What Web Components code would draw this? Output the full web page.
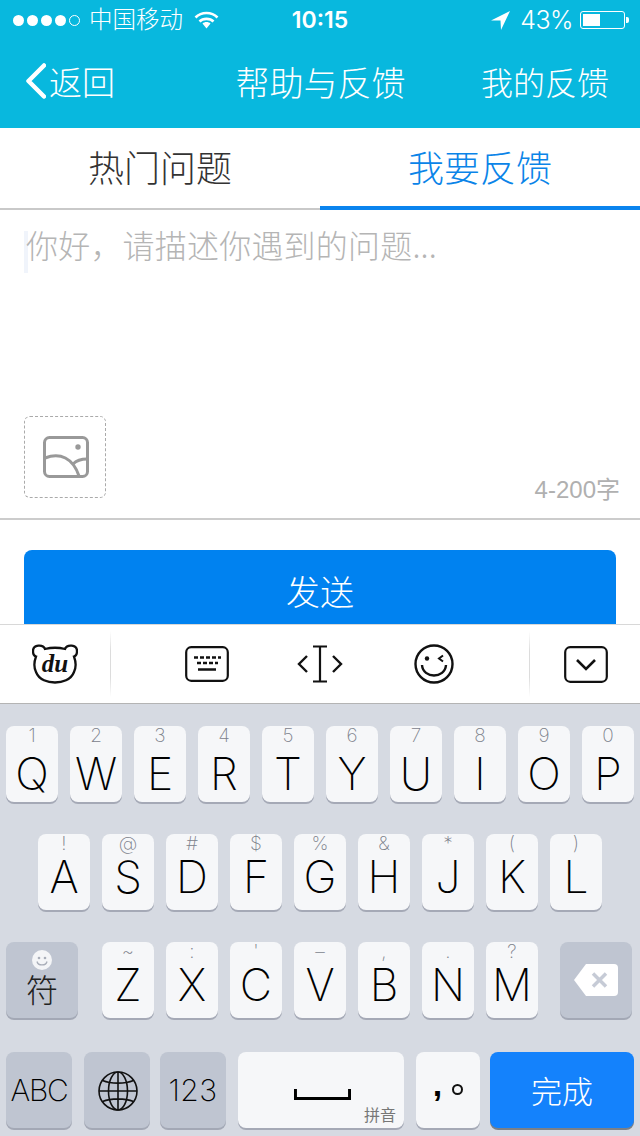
<!DOCTYPE html>
<html lang="zh">
<head>
<meta charset="utf-8">
<title>帮助与反馈</title>
<style>
  html, body { margin: 0; padding: 0; }
  body {
    width: 640px;
    height: 1136px;
    overflow: hidden;
    display: flex;
    flex-direction: column;
    background: #fff;
    font-family: "Noto Sans CJK SC", sans-serif;
    font-weight: 300;
  }
</style>
</head>
<body>
  <status-bar></status-bar>
  <nav-bar></nav-bar>
  <tab-bar></tab-bar>
  <feedback-form></feedback-form>
  <ime-toolbar></ime-toolbar>
  <ime-keyboard>
    <kb-row style="--drop:6px">
      <kb-key hint="1">Q</kb-key><kb-key hint="2">W</kb-key><kb-key hint="3">E</kb-key><kb-key hint="4">R</kb-key><kb-key hint="5">T</kb-key>
      <kb-key hint="6">Y</kb-key><kb-key hint="7">U</kb-key><kb-key hint="8">I</kb-key><kb-key hint="9">O</kb-key><kb-key hint="0">P</kb-key>
    </kb-row>
    <kb-row style="--drop:1px">
      <kb-key hint="!">A</kb-key><kb-key hint="@">S</kb-key><kb-key hint="#">D</kb-key><kb-key hint="$">F</kb-key><kb-key hint="%">G</kb-key>
      <kb-key hint="&amp;">H</kb-key><kb-key hint="*">J</kb-key><kb-key hint="(">K</kb-key><kb-key hint=")">L</kb-key>
    </kb-row>
    <kb-row style="--drop:1px">
      <kb-key dark style="width:72px;margin-right:12px">
        <symbol-face></symbol-face>
      </kb-key>
      <kb-key hint="~">Z</kb-key><kb-key hint=":">X</kb-key><kb-key hint="'">C</kb-key><kb-key hint="–">V</kb-key>
      <kb-key hint=",">B</kb-key><kb-key hint=".">N</kb-key><kb-key hint="?">M</kb-key>
      <kb-key dark plain style="width:72px;margin-left:10px;margin-right:2px">
        <svg width="46" height="34" viewBox="0 0 46 34">
          <path d="M13 1H41a4 4 0 0 1 4 4V29a4 4 0 0 1-4 4H13L1 17z" fill="#fff"/>
          <path d="M20 10.500 33 23.500M33 10.500 20 23.500" stroke="#c6cbd6" stroke-width="3.500" fill="none"/>
        </svg>
      </kb-key>
    </kb-row>
    <kb-row style="--gap:0;margin-top:2px">
      <kb-key dark plain style="width:66px"><span style="font:250 30px/44px Inter,sans-serif;letter-spacing:-1.300px">ABC</span></kb-key>
      <kb-key dark plain style="width:66px;margin-left:12px;padding:2px 0 0 2px">
        <svg width="42" height="42" viewBox="0 0 42 42" fill="none" stroke="#111" stroke-width="1.600">
          <circle cx="21" cy="21" r="19"/>
          <ellipse cx="21" cy="21" rx="9.500" ry="19"/>
          <path d="M21 2V40M2 21H40M5.500 10.500C14 14 28 14 36.500 10.500M5.500 31.500C14 28 28 28 36.500 31.500"/>
        </svg>
      </kb-key>
      <kb-key dark plain style="width:66px;margin-left:10px"><span style="font:250 30px/44px Inter,sans-serif;letter-spacing:.5px">123</span></kb-key>
      <kb-key plain style="width:166px;margin-left:12px"><space-cap></space-cap></kb-key>
      <kb-key plain style="width:64px;margin-left:12px"><punct-cap></punct-cap></kb-key>
      <kb-key done plain style="width:144px;margin-left:10px"><span style="font:300 31px/44px 'Noto Sans CJK SC',sans-serif">完成</span></kb-key>
    </kb-row>
  </ime-keyboard>

<script>
class StatusBar extends HTMLElement {
  constructor() {
    super()
    this.attachShadow({ mode: 'open' })
    this.shadowRoot.innerHTML = `
      <style>
        :host {
          display: flex;
          align-items: center;
          height: 40px;
          flex: none;
          padding: 0 11px 0 13px;
          box-sizing: border-box;
          background: #08b8de;
          color: #fff;
          font-size: 23.500px;
        }
        .left, .right { flex: 1; display: flex; align-items: center; }
        .left span { position: relative; top: -2px; }
        .right { justify-content: flex-end; }
        .dots { display: flex; gap: 3px; margin-right: 9px; }
        .dots i { width: 11px; height: 11px; border-radius: 50%; background: #fff; box-sizing: border-box; }
        .dots i:last-child { background: none; border: 1px solid #fff; }
        .wifi { margin-left: 11px; }
        .time { font: 600 23px/40px Inter, sans-serif; margin-left: -2px; }
        .pct { font: 300 25px/40px Inter, sans-serif; margin: 0 7px 0 10px; letter-spacing: -.5px; }
        .battery { display: flex; align-items: center; }
        .shell { width: 45px; height: 18px; border: 1px solid #fff; border-radius: 3px; box-sizing: border-box; padding: 2px; }
        .level { width: 17px; height: 100%; background: #fff; }
        .nub { width: 3px; height: 6px; background: #fff; border-radius: 0 2px 2px 0; margin-left: 1px; }
      </style>
      <div class="left">
        <div class="dots"><i></i><i></i><i></i><i></i><i></i></div>
        <span>中国移动</span>
        <svg class="wifi" width="25" height="18" viewBox="0 0 25 18" fill="none" stroke="#fff" stroke-width="2.600">
          <path d="M1.500 6.500C7.500 .5 17.500 .5 23.500 6.500"/>
          <path d="M5.500 10.500C9 7 16 7 19.500 10.500"/>
          <path d="M8.500 12.500 12.500 17.500 16.500 12.500C14.500 10.500 10.500 10.500 8.500 12.500Z" fill="#fff" stroke="none"/>
        </svg>
      </div>
      <div class="time">10:15</div>
      <div class="right">
        <svg width="19" height="19" viewBox="0 0 19 19"><path d="M0 9.500 19 0 10 19 9.500 9.500Z" fill="#fff"/></svg>
        <span class="pct">43%</span>
        <div class="battery"><div class="shell"><div class="level"></div></div><div class="nub"></div></div>
      </div>`
  }
}

class NavBar extends HTMLElement {
  constructor() {
    super()
    this.attachShadow({ mode: 'open' })
    this.shadowRoot.innerHTML = `
      <style>
        :host {
          display: grid;
          grid-template-columns: 1fr auto 1fr;
          align-items: center;
          height: 88px;
          flex: none;
          padding: 0 31px 6px 26px;
          box-sizing: border-box;
          background: #08b8de;
          color: #fff;
          font-size: 32px;
        }
        .back { display: flex; align-items: center; gap: 3px; font-size: 33px; }
        .title { font-size: 34px; padding-left: 6px; }
        .mine { text-align: right; }
      </style>
      <div class="back">
        <svg width="20" height="36" viewBox="0 0 20 36" fill="none" stroke="#fff" stroke-width="4.500" stroke-linecap="round" stroke-linejoin="round"><path d="M18 2.500 2.500 18 18 33.500"/></svg>
        <span>返回</span>
      </div>
      <div class="title">帮助与反馈</div>
      <div class="mine">我的反馈</div>`
  }
}

class TabBar extends HTMLElement {
  constructor() {
    super()
    this.attachShadow({ mode: 'open' })
    this.shadowRoot.innerHTML = `
      <style>
        :host {
          display: grid;
          grid-template-columns: 1fr 1fr;
          height: 82px;
          flex: none;
          box-sizing: border-box;
          border-bottom: 2px solid #c9c9c9;
          font-size: 36px;
        }
        div { display: flex; align-items: center; justify-content: center; color: #333; padding-bottom: 4px; }
        .on { color: #0a84e8; border-bottom: 4px solid #0a84ee; margin-bottom: -2px; padding-bottom: 2px; }
      </style>
      <div>热门问题</div>
      <div class="on">我要反馈</div>`
  }
}

class FeedbackForm extends HTMLElement {
  constructor() {
    super()
    this.attachShadow({ mode: 'open' })
    this.shadowRoot.innerHTML = `
      <style>
        :host { display: flex; flex-direction: column; flex: 1; min-height: 0; overflow: hidden; }
        .box {
          height: 310px;
          flex: none;
          box-sizing: border-box;
          display: flex;
          flex-direction: column;
          border-bottom: 2px solid #ccc;
          padding: 21px 20px 0 24px;
        }
        .prompt { display: flex; height: 185px; flex: none; font-size: 32px; line-height: 34px; color: #b5b5b5; letter-spacing: .2px; }
        .prompt div:last-child { margin-top: -4px; }
        .caret { width: 4px; height: 42px; margin-right: -2px; background: #f0f4fb; }
        .foot { display: flex; justify-content: space-between; align-items: flex-end; }
        .pick {
          width: 82px;
          height: 82px;
          box-sizing: border-box;
          border: 1px dashed #aaa;
          border-radius: 6px;
          display: flex;
          align-items: center;
          justify-content: center;
        }
        .pick svg { margin-left: 2px; }
        .count { font: 24px/28px "Liberation Sans", "Noto Sans CJK SC", sans-serif; color: #b0b0b0; margin-bottom: -6px; }
        .send {
          flex: none;
          margin: 30px 24px 0;
          height: 84px;
          border-radius: 8px;
          background: #0082f0;
          color: #fff;
          font-size: 34px;
          display: flex;
          align-items: flex-start;
          justify-content: center;
          line-height: 82px;
        }
      </style>
      <div class="box">
        <div class="prompt"><div class="caret"></div><div>你好，请描述你遇到的问题...</div></div>
        <div class="foot">
          <div class="pick">
            <svg width="46" height="42" viewBox="0 0 46 42" fill="none" stroke="#999" stroke-width="3">
              <rect x="1.500" y="1.500" width="43" height="39" rx="5"/>
              <path d="M2 22C17 16 30 22 36 40M30 28C33 25 39 23 44 23"/>
              <circle cx="35" cy="11" r="2.700" fill="#999" stroke="none"/>
            </svg>
          </div>
          <div class="count">4-200字</div>
        </div>
      </div>
      <div class="send">发送</div>`
  }
}

class ImeToolbar extends HTMLElement {
  constructor() {
    super()
    this.attachShadow({ mode: 'open' })
    this.shadowRoot.innerHTML = `
      <style>
        :host {
          display: flex;
          align-items: center;
          height: 80px;
          flex: none;
          box-sizing: border-box;
          background: #fff;
          border-top: 1px solid #d8d8d8;
          border-bottom: 1px solid #b4b4b4;
        }
        .logo { width: 110px; display: flex; justify-content: center; }
        .sep { width: 1px; height: 66px; background: linear-gradient(#fff, #dcdcdc 30%, #dcdcdc 70%, #fff); }
        .mid { flex: 1; display: flex; justify-content: space-between; align-items: center; padding: 0 75px 0 74px; }
        .mid svg:nth-child(2) { margin-left: -4px; }
        .end { width: 110px; display: flex; justify-content: center; padding-left: 1px; box-sizing: border-box; }
        svg { display: block; }
        text { font: italic 700 25px "Liberation Serif", serif; }
      </style>
      <div class="logo">
        <svg width="46" height="40" viewBox="0 0 46 40" fill="none" stroke="#111" stroke-width="2.300">
          <path d="M13 5C19 3.500 27 3.500 33 5C35 0 45 .5 45 7C45 10 43.500 12 42 12.500C44 18 44 24 42 28C39 36 30 38.500 23 38.500C16 38.500 7 36 4 28C2 24 2 18 4 12.500C2.500 12 1 10 1 7C1 .5 11 0 13 5Z"/>
          <text x="23" y="28" text-anchor="middle" fill="#111" stroke="none">du</text>
        </svg>
      </div>
      <div class="sep"></div>
      <div class="mid">
        <svg width="44" height="36" viewBox="0 0 44 36" fill="none" stroke="#111" stroke-width="2.200">
          <rect x="1.200" y="1.200" width="41.600" height="33.600" rx="5"/>
          <path d="M9 11.500H13M15 11.500H19M21 11.500H25M27 11.500H31M33 11.500H36M12 17H16M18 17H22M24 17H28M30 17H33M13 23.500H31" stroke-width="2.600"/>
        </svg>
        <svg width="46" height="38" viewBox="0 0 46 38" fill="none" stroke="#111" stroke-width="2.200">
          <path d="M10 11 2 19 10 27M36 11 44 19 36 27" stroke-width="2.400"/>
          <path d="M16 1.500H30M23 1.500V36.500M16 36.500H30"/>
        </svg>
        <svg width="40" height="40" viewBox="0 0 40 40" fill="none" stroke="#111" stroke-width="2.400">
          <circle cx="20" cy="20" r="18.500"/>
          <circle cx="13" cy="14.500" r="2.200" fill="#111" stroke="none"/>
          <path d="M29 11.500 25 14.500 29 17.500" stroke-width="2"/>
          <path d="M8 21C9 35 31 35 32 21"/>
        </svg>
      </div>
      <div class="sep"></div>
      <div class="end">
        <svg width="44" height="37" viewBox="0 0 44 37" fill="none" stroke="#111" stroke-width="2.200">
          <rect x="1.200" y="1.200" width="41.600" height="34.600" rx="5"/>
          <path d="M13 14 22 23 31 14" stroke-width="2.600"/>
        </svg>
      </div>`
  }
}

class ImeKeyboard extends HTMLElement {
  constructor() {
    super()
    this.attachShadow({ mode: 'open' })
    this.shadowRoot.innerHTML = `
      <style>
        :host {
          display: flex;
          flex-direction: column;
          gap: 32px;
          flex: none;
          height: 432px;
          box-sizing: border-box;
          padding-top: 22px;
          background: #d6dae2;
        }
      </style>
      <slot></slot>`
  }
}

class KbRow extends HTMLElement {
  constructor() {
    super()
    this.attachShadow({ mode: 'open' })
    this.shadowRoot.innerHTML = `
      <style>
        :host { display: flex; justify-content: center; gap: var(--gap, 12px); }
      </style>
      <slot></slot>`
  }
}

const keyTemplate = document.createElement('template')
keyTemplate.innerHTML = `
  <style>
    :host {
      display: flex;
      flex-direction: column;
      align-items: center;
      flex: none;
      width: 52px;
      height: 76px;
      box-sizing: border-box;
      border-radius: 8px;
      background: #f6f7f9;
      box-shadow: 0 2px 0 #a5a9b6;
      color: #000;
      font: 250 44.500px/44px Inter, sans-serif;
    }
    :host([dark]) { background: #bfc5d1; box-shadow: 0 2px 0 #a3a8b5; }
    :host([done]) { background: #1482fc; box-shadow: 0 2px 0 #7b8087; color: #fff; }
    :host([plain]) { justify-content: center; }
    #hint { height: 20px; margin-bottom: var(--drop, 0); font: 250 19px/20px Inter, sans-serif; color: #7c818b; }
  </style>
  <span id="hint"></span>
  <slot></slot>
`

class KbKey extends HTMLElement {
  constructor() {
    super()
    this.attachShadow({ mode: 'open' })
  }

  connectedCallback() {
    this.shadowRoot.appendChild(keyTemplate.content.cloneNode(true))
    const hint = this.shadowRoot.getElementById('hint')
    if (this.hasAttribute('hint')) hint.textContent = this.getAttribute('hint')
    else hint.remove()
  }
}

class SymbolFace extends HTMLElement {
  constructor() {
    super()
    this.attachShadow({ mode: 'open' })
    this.shadowRoot.innerHTML = `
      <style>
        :host { display: flex; flex-direction: column; align-items: center; padding-top: 8px; }
        span { font: 300 32px/34px "Noto Sans CJK SC", sans-serif; color: #222; margin-top: 1px; }
        svg { display: block; }
      </style>
      <svg width="20" height="20" viewBox="0 0 20 20">
        <circle cx="10" cy="10" r="10" fill="#f4f5f7"/>
        <circle cx="7" cy="8" r="1.300" fill="#a9aeb9"/><circle cx="13" cy="8" r="1.300" fill="#a9aeb9"/>
        <path d="M5 11.500C6 16 14 16 15 11.500" fill="none" stroke="#a9aeb9" stroke-width="1.300"/>
      </svg>
      <span>符</span>`
  }
}

class SpaceCap extends HTMLElement {
  constructor() {
    super()
    this.attachShadow({ mode: 'open' })
    this.shadowRoot.innerHTML = `
      <style>
        :host { display: flex; flex-direction: column; width: 100%; height: 76px; box-sizing: border-box; padding: 37px 8px 0; }
        svg { display: block; margin-left: 48px; }
        span { font: 16px/18px "Noto Sans CJK SC", sans-serif; color: #777; align-self: flex-end; margin-top: 5px; }
      </style>
      <svg width="57" height="11" viewBox="0 0 58 11" fill="none" stroke="#000" stroke-width="3"><path d="M1.500 0V9.500H56.500V0"/></svg>
      <span>拼音</span>`
  }
}

class PunctCap extends HTMLElement {
  constructor() {
    super()
    this.attachShadow({ mode: 'open' })
    this.shadowRoot.innerHTML = `
      <style>
        :host { display: flex; align-items: center; gap: 10px; padding-bottom: 2px; }
        b { font: 700 34px/34px "Liberation Sans", sans-serif; margin-top: -10px; }
        i { width: 11px; height: 11px; box-sizing: border-box; border: 2.500px solid #111; border-radius: 50%; }
      </style>
      <b>,</b><i></i>`
  }
}

customElements.define('status-bar', StatusBar)
customElements.define('nav-bar', NavBar)
customElements.define('tab-bar', TabBar)
customElements.define('feedback-form', FeedbackForm)
customElements.define('ime-toolbar', ImeToolbar)
customElements.define('ime-keyboard', ImeKeyboard)
customElements.define('kb-row', KbRow)
customElements.define('kb-key', KbKey)
customElements.define('symbol-face', SymbolFace)
customElements.define('space-cap', SpaceCap)
customElements.define('punct-cap', PunctCap)
</script>
</body>
</html>
